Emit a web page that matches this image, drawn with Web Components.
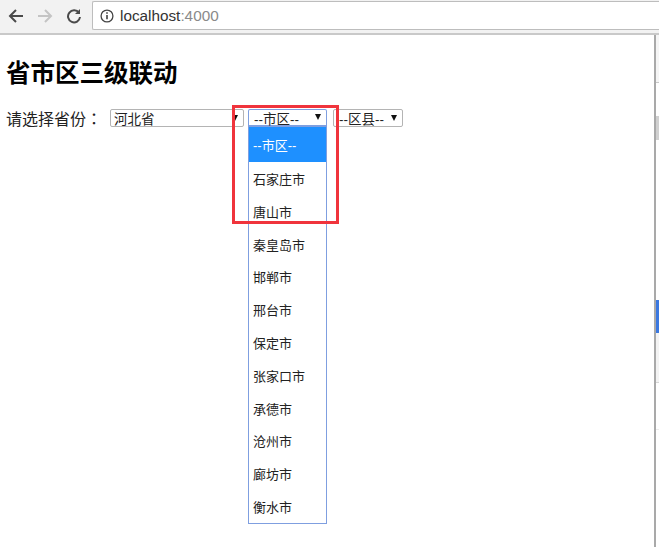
<!DOCTYPE html>
<html lang="zh">
<head>
<meta charset="utf-8">
<title>省市区三级联动</title>
<style>
  html, body { margin: 0; height: 100%; background: #fff; overflow: hidden; }
  body { font-family: "Liberation Sans", "Noto Sans CJK SC", sans-serif; }
</style>
</head>
<body>
<browser-frame>
  <h-title>省市区三级联动</h-title>
  <region-picker></region-picker>
</browser-frame>

<script>
class BrowserFrame extends HTMLElement {
  constructor() {
    super();
    const shadow = this.attachShadow({ mode: "open" });
    shadow.innerHTML = `
      <style>
        :host { display: flex; flex-direction: column; width: 659px; height: 547px; }
        .toolbar {
          display: flex;
          align-items: flex-start;
          height: 33px;
          background: #f2f2f2;
          border-bottom: 2px solid #c9c9c9;
          box-sizing: content-box;
        }
        .nav { display: flex; width: 92px; padding: 8px 0 0 7px; gap: 11px; box-sizing: border-box; }
        .nav svg { display: block; width: 18px; height: 16px; fill: none; stroke-width: 2; }
        .address {
          flex: 1;
          display: flex;
          align-items: center;
          gap: 6px;
          height: 27px;
          margin-top: 1px;
          padding-left: 7px;
          background: #fff;
          border: 1px solid #bdbdbd;
          border-right: 0;
          border-radius: 2px 0 0 2px;
          font: 15.3px "Liberation Sans", sans-serif;
          color: #333;
        }
        .address svg { width: 14px; height: 14px; flex: none; }
        .address span { color: #8a8a8a; }
        .body { flex: 1; display: flex; }
        .page { flex: 1; padding: 0 6px; }
        .rail {
          width: 3px;
          border-left: 2px solid #a9a9a9;
          display: flex;
          flex-direction: column;
        }
        .rail i { display: block; }
        .rail .top { height: 47px; background: #f5f5f5; border-bottom: 1px solid #c8c8c8; }
        .rail .gap1 { height: 33px; }
        .rail .thumb { height: 24px; background: #d0d0d0; }
        .rail .gap2 { height: 160px; }
        .rail .b { height: 33px; background: #3b78e0; }
        .rail .c { height: 49px; background: #f3f3f3; border-bottom: 1px solid #d6d6d6; }
        .rail .gap3 { height: 46px; border-bottom: 1px solid #ececec; }
      </style>
      <div class="toolbar">
        <div class="nav">
          <svg viewBox="0 0 18 16" stroke="#4a4a4a"><path d="M16 8H3M9 2L3 8l6 6"/></svg>
          <svg viewBox="0 0 18 16" stroke="#c4c4c4"><path d="M2 8h13M9 2l6 6-6 6"/></svg>
          <svg viewBox="0 0 18 16" stroke="#4a4a4a"><path d="M14 5a6 6 0 1 0 1 4"/><path d="M15 1v5h-5" fill="#4a4a4a" stroke="none"/></svg>
        </div>
        <div class="address">
          <svg viewBox="0 0 13 13" fill="none" stroke="#444" stroke-width="1.2"><circle cx="6.5" cy="6.5" r="5.5"/><path d="M6.5 5.6v4M6.5 3v1.5" stroke-width="1.5"/></svg>
          <div>localhost<span>:4000</span></div>
        </div>
      </div>
      <div class="body">
        <div class="page"><slot></slot></div>
        <div class="rail">
          <i class="top"></i><i class="gap1"></i><i class="thumb"></i><i class="gap2"></i>
          <i class="b"></i><i class="c"></i><i class="gap3"></i>
        </div>
      </div>
    `;
  }
}

class HTitle extends HTMLElement {
  constructor() {
    super();
    const shadow = this.attachShadow({ mode: "open" });
    shadow.innerHTML = `
      <style>
        :host {
          display: block;
          margin-top: 23px;
          height: 32px;
          font: bold 24.5px/32px "Liberation Sans", "Noto Sans CJK SC", sans-serif;
          color: #000;
        }
      </style>
      <slot></slot>
    `;
  }
}

class SelectBox extends HTMLElement {
  constructor() {
    super();
    const shadow = this.attachShadow({ mode: "open" });
    shadow.innerHTML = `
      <style>
        :host {
          display: flex;
          align-items: center;
          justify-content: space-between;
          box-sizing: border-box;
          height: 18px;
          padding: 0 5px;
          background: #fff;
          border: 1px solid #b4b4b4;
          border-radius: 2px;
          font: 13.5px/19px "Liberation Sans", "Noto Sans CJK SC", sans-serif;
          color: #222;
        }
        :host([open]) { border-color: #7f9fe0; border-bottom-width: 2px; border-radius: 2px 2px 0 0; }
        span { height: 16px; }
        i { width: 0; height: 0; border: 3.5px solid transparent; border-top: 6px solid #111; border-bottom: 0; margin-top: -1px; }
      </style>
      <span><slot></slot></span><i></i>
    `;
  }
}

class RegionPicker extends HTMLElement {
  constructor() {
    super();
    const shadow = this.attachShadow({ mode: "open" });
    const cities = ["石家庄市", "唐山市", "秦皇岛市", "邯郸市", "邢台市", "保定市", "张家口市", "承德市", "沧州市", "廊坊市", "衡水市"];
    shadow.innerHTML = `
      <style>
        :host {
          display: flex;
          align-items: center;
          height: 18px;
          position: relative;
          margin-top: 19px;
          font: 16px/18px "Liberation Sans", "Noto Sans CJK SC", sans-serif;
          color: #222;
        }
        .label { width: 104px; margin-top: 2px; white-space: nowrap; }
        .label b { font: inherit; font-family: "Noto Sans CJK TC", sans-serif; }
        .province { width: 134px; margin-right: 4px; padding-left: 3px; }
        .city { width: 79px; margin-right: 6px; }
        .county { width: 70px; }
        .list {
          position: absolute;
          left: 242px;
          top: 18px;
          width: 79px;
          box-sizing: border-box;
          background: #fff;
          border: 1px solid #7f9fe0;
          border-top: 0;
          font-size: 13px;
        }
        .list div { height: 32.8px; line-height: 36.8px; padding-left: 4px; }
        .list .on { height: 35px; line-height: 38px; background: #1e90ff; color: #fff; }
        .mark {
          position: absolute;
          left: 226px;
          top: -4px;
          width: 107px;
          height: 119px;
          box-sizing: border-box;
          border: 3px solid #f0343c;
        }
      </style>
      <span class="label">请选择省份<b lang="zh-TW">：</b></span>
      <select-box class="province">河北省</select-box>
      <select-box class="city" open>--市区--</select-box>
      <select-box class="county">--区县--</select-box>
      <div class="list">
        <div class="on">--市区--</div>
        ${cities.map(c => `<div>${c}</div>`).join("")}
      </div>
      <div class="mark"></div>
    `;
  }
}

customElements.define("browser-frame", BrowserFrame);
customElements.define("h-title", HTitle);
customElements.define("select-box", SelectBox);
customElements.define("region-picker", RegionPicker);
</script>
</body>
</html>
